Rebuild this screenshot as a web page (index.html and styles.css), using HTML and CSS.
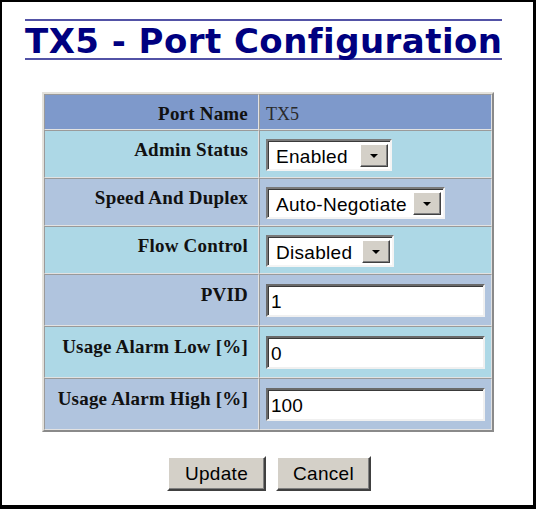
FILE: index.html
```html
<!DOCTYPE html>
<html lang="en">
<head>
    <meta charset="UTF-8">
    <meta name="viewport" content="width=device-width, initial-scale=1.0">
    <title>TX5 - Port Configuration</title>
    <link rel="stylesheet" href="styles.css">
</head>
<body>
    <div class="frame">
        <h1 class="title">TX5 - Port Configuration</h1>
        <form class="port-form">
            <table class="config">
                <tr class="row-head">
                    <td class="label">Port Name</td>
                    <td class="value plain">TX5</td>
                </tr>
                <tr class="row-light">
                    <td class="label">Admin Status</td>
                    <td class="value">
                        <span class="dropdown status">
                            <select name="admin">
                                <option selected>Enabled</option>
                                <option>Disabled</option>
                            </select>
                            <span class="arrow"><svg width="8" height="4" viewBox="0 0 8 4"><path d="M0 0h8L4 4z" fill="#000"/></svg></span>
                        </span>
                    </td>
                </tr>
                <tr class="row-steel">
                    <td class="label">Speed And Duplex</td>
                    <td class="value">
                        <span class="dropdown speed">
                            <select name="speed">
                                <option selected>Auto-Negotiate</option>
                                <option>10 Half</option>
                                <option>10 Full</option>
                                <option>100 Half</option>
                                <option>100 Full</option>
                            </select>
                            <span class="arrow"><svg width="8" height="4" viewBox="0 0 8 4"><path d="M0 0h8L4 4z" fill="#000"/></svg></span>
                        </span>
                    </td>
                </tr>
                <tr class="row-light">
                    <td class="label">Flow Control</td>
                    <td class="value">
                        <span class="dropdown flow">
                            <select name="flow">
                                <option>Enabled</option>
                                <option selected>Disabled</option>
                            </select>
                            <span class="arrow"><svg width="8" height="4" viewBox="0 0 8 4"><path d="M0 0h8L4 4z" fill="#000"/></svg></span>
                        </span>
                    </td>
                </tr>
                <tr class="row-steel field-row">
                    <td class="label">PVID</td>
                    <td class="value"><input type="text" name="pvid" value="1"></td>
                </tr>
                <tr class="row-light field-row">
                    <td class="label">Usage Alarm Low [%]</td>
                    <td class="value"><input type="text" name="alarm_low" value="0"></td>
                </tr>
                <tr class="row-steel field-row">
                    <td class="label">Usage Alarm High [%]</td>
                    <td class="value"><input type="text" name="alarm_high" value="100"></td>
                </tr>
            </table>
            <div class="actions">
                <button type="button" class="update">Update</button>
                <button type="button" class="cancel">Cancel</button>
            </div>
        </form>
    </div>
</body>
</html>
```

FILE: styles.css
```css
html, body {
    margin: 0;
    padding: 0;
    background-color: #fff;
}
.frame {
    box-sizing: border-box;
    height: 509px;
    border-style: solid;
    border-color: #000;
    border-width: 2px 3px 4px 2px;
    overflow: hidden;
}
.title {
    box-sizing: border-box;
    width: 477px;
    margin: 17px 0 0 23px;
    padding: 3px 0 0;
    border-top: 2px solid #5252a6;
    border-bottom: 2px solid #5252a6;
    font-family: "DejaVu Sans", Verdana, sans-serif;
    font-weight: bold;
    font-size: 34px;
    line-height: 34px;
    letter-spacing: 0.45px;
    color: #000080;
    white-space: nowrap;
}
.config {
    box-sizing: border-box;
    width: 452px;
    margin: 32px 0 0 40px;
    table-layout: fixed;
    border-collapse: separate;
    border-spacing: 0;
    border: 2px solid;
    border-color: #e4e2dc #8a8a8a #8a8a8a #e4e2dc;
}
.config td {
    border: 1px solid;
    border-color: #9a9a9a #e2e2e2 #e2e2e2 #9a9a9a;
    vertical-align: top;
}
.config .label {
    box-sizing: border-box;
    width: 215px;
    padding: 8px 10px 5px 4px;
    text-align: right;
    font-family: "Liberation Serif", "Times New Roman", serif;
    font-weight: bold;
    font-size: 19px;
    line-height: 21px;
    letter-spacing: 0.2px;
    color: #111;
    white-space: nowrap;
}
.config .value {
    padding: 8px 6px 6px 6px;
}
.config .plain {
    padding-top: 9px;
    padding-bottom: 4px;
    font-family: "Liberation Serif", "Times New Roman", serif;
    font-size: 18px;
    line-height: 20px;
    color: #2a2a2a;
}
.config .field-row .value {
    padding: 9px 6px 8px 6px;
}
.config .field-row .label {
    padding-top: 9px;
}
.row-head td {
    background-color: #7e99cb;
}
.row-light td {
    background-color: #add8e6;
}
.row-steel td {
    background-color: #b0c4de;
}
.dropdown {
    position: relative;
    display: inline-block;
    vertical-align: top;
}
.dropdown select {
    box-sizing: border-box;
    display: block;
    height: 32px;
    margin: 0;
    padding: 2px 34px 0 8px;
    -webkit-appearance: none;
    appearance: none;
    background-color: #fff;
    border: 2px solid;
    border-color: #7a7a7a #f4f4f4 #f4f4f4 #7a7a7a;
    box-shadow: inset 1px 1px #3a3a3a;
    border-radius: 0;
    font-family: "Liberation Sans", Arial, sans-serif;
    font-size: 19px;
    letter-spacing: 0.3px;
    color: #000;
}
.dropdown.status select {
    width: 126px;
}
.dropdown.speed select {
    width: 179px;
}
.dropdown.flow select {
    width: 128px;
}
.dropdown .arrow {
    position: absolute;
    top: 5px;
    right: 4px;
    bottom: 4px;
    width: 28px;
    box-sizing: border-box;
    display: flex;
    align-items: center;
    justify-content: center;
    background-color: #d4d0c8;
    border: 1px solid;
    border-color: #fff #404040 #404040 #fff;
    box-shadow: inset -1px -1px #808080;
    pointer-events: none;
}
.value input {
    box-sizing: border-box;
    display: block;
    width: 219px;
    height: 33px;
    margin: 0;
    padding: 2px 3px 0;
    background-color: #fff;
    border: 2px solid;
    border-color: #6a6a6a #f0f0f0 #f0f0f0 #6a6a6a;
    box-shadow: inset 1px 1px #3a3a3a;
    border-radius: 0;
    font-family: "Liberation Sans", Arial, sans-serif;
    font-size: 19px;
    color: #000;
    outline: none;
}
.actions {
    display: flex;
    justify-content: center;
    gap: 10px;
    margin: 24px 0 0 3px;
}
.actions button {
    box-sizing: border-box;
    height: 35px;
    padding: 0;
    background-color: #d4d0c8;
    border: 2px solid;
    border-color: #fff #404040 #404040 #fff;
    box-shadow: inset -1px -1px #808080;
    border-radius: 0;
    font-family: "Liberation Sans", Arial, sans-serif;
    font-size: 19px;
    letter-spacing: 0.3px;
    color: #000;
    cursor: pointer;
}
.actions .update {
    width: 99px;
}
.actions .cancel {
    width: 95px;
}
```
